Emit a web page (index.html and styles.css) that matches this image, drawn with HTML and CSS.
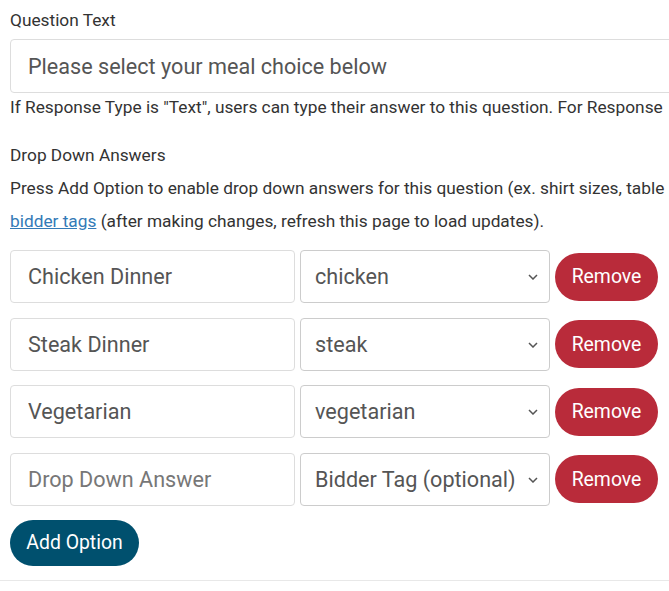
FILE: index.html
```html
<!DOCTYPE html>
<html>
<head>
<meta charset="utf-8">
<link rel="stylesheet" href="styles.css">
</head>
<body>
<div class="page">
  <div class="label">Question Text</div>
  <input class="text-input wide" type="text" value="Please select your meal choice below">
  <div class="help">If Response Type is "Text", users can type their answer to this question. For Response</div>

  <div class="label section">Drop Down Answers</div>
  <p class="desc"><span class="nw">Press Add Option to enable drop down answers for this question (ex. shirt sizes, table</span><br><span class="nw"><a href="#">bidder tags</a> (after making changes, refresh this page to load updates).</span></p>

  <div class="rows">
    <div class="row">
      <input class="text-input answer" type="text" value="Chicken Dinner">
      <div class="select-wrap">
        <select class="select"><option>chicken</option></select>
        <svg class="chev" width="10" height="6" viewBox="0 0 10 6"><path d="M1 1 L5 5 L9 1" fill="none" stroke="#555" stroke-width="1.5"/></svg>
      </div>
      <button class="btn remove">Remove</button>
    </div>
    <div class="row">
      <input class="text-input answer" type="text" value="Steak Dinner">
      <div class="select-wrap">
        <select class="select"><option>steak</option></select>
        <svg class="chev" width="10" height="6" viewBox="0 0 10 6"><path d="M1 1 L5 5 L9 1" fill="none" stroke="#555" stroke-width="1.5"/></svg>
      </div>
      <button class="btn remove">Remove</button>
    </div>
    <div class="row">
      <input class="text-input answer" type="text" value="Vegetarian">
      <div class="select-wrap">
        <select class="select"><option>vegetarian</option></select>
        <svg class="chev" width="10" height="6" viewBox="0 0 10 6"><path d="M1 1 L5 5 L9 1" fill="none" stroke="#555" stroke-width="1.5"/></svg>
      </div>
      <button class="btn remove">Remove</button>
    </div>
    <div class="row">
      <input class="text-input answer" type="text" placeholder="Drop Down Answer">
      <div class="select-wrap">
        <select class="select"><option>Bidder Tag (optional)</option></select>
        <svg class="chev" width="10" height="6" viewBox="0 0 10 6"><path d="M1 1 L5 5 L9 1" fill="none" stroke="#555" stroke-width="1.5"/></svg>
      </div>
      <button class="btn remove">Remove</button>
    </div>
  </div>

  <button class="btn add">Add Option</button>
</div>
<hr class="divider">
</body>
</html>
```
FILE: styles.css
```css
html, body {
  margin: 0;
  padding: 0;
  background: #fff;
  overflow: hidden;
}
body {
  font-family: Roboto, "Liberation Sans", sans-serif;
  color: #333;
  font-size: 17.3px;
  width: 669px;
}
.page {
  padding: 8px 0 0 10px;
}
.label {
  line-height: 24px;
  font-size: 17.3px;
  color: #333;
}
.section {
  margin-top: 24px;
}
.text-input {
  box-sizing: border-box;
  font-family: Roboto, "Liberation Sans", sans-serif;
  font-size: 21.6px;
  color: #555;
  border: 1px solid #ddd;
  border-radius: 4px;
  padding: 0 17px;
  height: 54px;
  background: #fff;
  outline: none;
  display: block;
}
.text-input::placeholder {
  color: #777;
}
.wide {
  width: 900px;
  margin-top: 7px;
}
.help {
  white-space: nowrap;
  line-height: 24px;
  margin-top: 2px;
}
.desc {
  margin: 5px 0 0 0;
  line-height: 33px;
}
.nw {
  white-space: nowrap;
}
.desc a {
  color: #337ab7;
  text-decoration: underline;
}
.rows {
  margin-top: 12px;
  display: flex;
  flex-direction: column;
  gap: 14.5px;
}
.row {
  display: flex;
  align-items: center;
  gap: 5px;
  height: 53px;
}
.answer {
  width: 285px;
  height: 53px;
}
.select-wrap {
  position: relative;
  width: 250px;
  height: 53px;
}
.select {
  appearance: none;
  -webkit-appearance: none;
  box-sizing: border-box;
  width: 250px;
  height: 53px;
  border: 1px solid #ccc;
  border-radius: 4px;
  background: #fff;
  font-family: Roboto, "Liberation Sans", sans-serif;
  font-size: 21.6px;
  color: #555;
  padding: 0 30px 0 14px;
  outline: none;
}
.chev {
  position: absolute;
  right: 12px;
  top: 24px;
  pointer-events: none;
}
.btn {
  border: none;
  font-family: Roboto, "Liberation Sans", sans-serif;
  font-size: 19.4px;
  color: #fff;
  border-radius: 24px;
  padding: 0;
  cursor: pointer;
}
.remove {
  background: #b92b3a;
  height: 48px;
  width: 103px;
}
.add {
  background: #00506e;
  height: 46px;
  width: 129px;
  margin-top: 14px;
  display: block;
}
.divider {
  border: none;
  border-top: 1px solid #e8e8e8;
  margin: 14px 0 0 0;
  height: 0;
}
```
